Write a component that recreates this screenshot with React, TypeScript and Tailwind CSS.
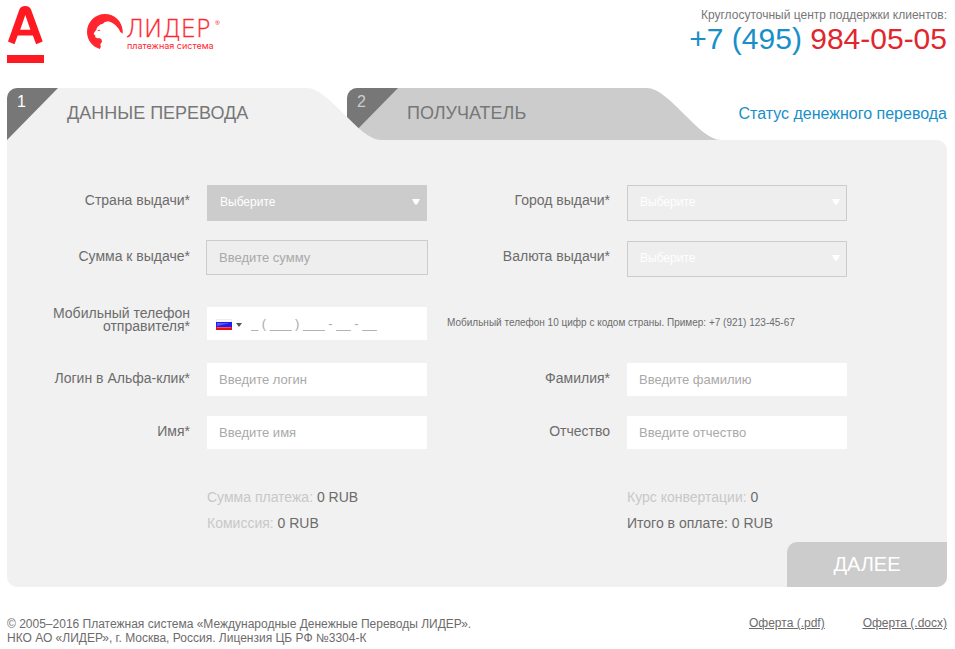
import { useId, type ReactNode } from 'react';

function AlfaLogo() {
  return (
    <svg width="37" height="58" viewBox="0 0 37 58" fill="#ff1921" role="img" aria-label="Альфа-Банк">
      <path
        fillRule="evenodd"
        d="M12.400 3.600C13.400 1.200 15 0 18.200 0s4.800 1.200 5.800 3.600L35.700 35.600l-6.600 2.600-3.200-8.600H10.700l-3.200 8.600-6.500-2.600ZM18.300 9 13.200 23.800h10.200Z"
      />
      <rect y="49" width="37" height="8" />
    </svg>
  );
}

function LeaderLogo() {
  return (
    <svg width="136" height="40" viewBox="0 0 136 40" fill="#ff2630" role="img" aria-label="ЛИДЕР платежная система">
      <path d="M12.800 36C5 33.500 0 26.800 0 19 0 9 8 1 18 1c9.500 0 16.800 7 17.700 16.500l-.1 3.300-2.200-1.700-1.600-3.200-3.400-3.900-3.300-2.300-3.600-1.400-3.700.6-1.900 1.900-2.600.6-1.700 1.500-1.600 1.700-.6 2.200-2.200 2.600-.5 1.900 1.500.9.1 2 2 1.100 2.600-.1 1.700 1.400.4 2.200-1.700 2.500.5 2.400Z" />
      <path d="m10 17.300 2.400-.6 1.200.5-1.600.8Z" />
      <text x="39" y="24" fontSize="24" stroke="#ff2630" strokeWidth="0.3" fontFamily="'DejaVu Sans Light', 'DejaVu Sans', sans-serif" fontWeight="200">ЛИДЕР</text>
      <text x="128" y="12" fontSize="6" fontFamily="'Open Sans', sans-serif">®</text>
      <text x="40" y="36" fontSize="9" fontFamily="Inter, sans-serif" fontWeight="400">платежная система</text>
    </svg>
  );
}

type TabProps = { step: number; title: string; active?: boolean };

function Tab({ step, title, active = false }: TabProps) {
  const clip = useId();
  return (
    <li className={active ? 'relative z-10 h-[52px] w-[376px]' : 'relative -ml-9 h-[52px] w-[376px]'}>
      <svg className="absolute inset-0" width="376" height="52" viewBox="0 0 376 52" aria-hidden="true">
        <clipPath id={clip}>
          <path d="M0 52V10A10 10 0 0 1 10 0H300C322 0 352 52 374 52Z" />
        </clipPath>
        <g clipPath={`url(#${clip})`}>
          <rect width="376" height="52" fill={active ? '#f1f1f1' : '#cccccc'} />
          <path d="M0 0H51L0 52Z" fill="#777777" />
        </g>
      </svg>
      <button
        type="button"
        aria-current={active ? 'step' : undefined}
        className="relative flex h-full w-full items-start pl-[10px] text-left"
      >
        <span className={active ? 'w-[50px] pt-1 text-base leading-5 text-white' : 'w-[50px] pt-1 text-base leading-5 text-[#cccccc]'}>
          {step}
        </span>
        <span className="pt-[15px] text-lg leading-5 text-[#777777]">{title}</span>
      </button>
    </li>
  );
}

function Field({ id, label, children }: { id: string; label: ReactNode; children: ReactNode }) {
  return (
    <div className="flex w-[420px] items-start gap-[17px]">
      <label htmlFor={id} className="flex min-h-[31px] w-[183px] items-center justify-end text-right text-sm leading-[13px]">
        {label}
      </label>
      {children}
    </div>
  );
}

function SelectField({ id, label, disabled = false }: { id: string; label: string; disabled?: boolean }) {
  return (
    <Field id={id} label={label}>
      <div className="relative">
        <select
          id={id}
          disabled={disabled}
          className="block h-9 w-[220px] appearance-none rounded-none border border-[#cccccc] bg-[#cccccc] px-3 pb-[2px] text-xs text-white opacity-100 disabled:bg-[#eeeeee]"
        >
          <option>Выберите</option>
        </select>
        <svg className="pointer-events-none absolute top-[14px] right-[7px]" width="8" height="6" viewBox="0 0 8 6" fill="#ffffff" aria-hidden="true">
          <path d="M0 0H8L5 5.500H3Z" />
        </svg>
      </div>
    </Field>
  );
}

function InputField({ id, label, placeholder, disabled = false }: { id: string; label: string; placeholder: string; disabled?: boolean }) {
  return (
    <Field id={id} label={label}>
      <input
        id={id}
        type="text"
        disabled={disabled}
        placeholder={placeholder}
        className="block h-[33px] w-[220px] bg-white px-3 text-[13px] placeholder:text-[#a9a9a9] disabled:bg-[#eeeeee] disabled:outline disabled:outline-[#cccccc]"
      />
    </Field>
  );
}

function Flag() {
  return (
    <svg width="16" height="11" viewBox="0 0 16 11" aria-hidden="true">
      <rect width="16" height="11" fill="#e8eef2" />
      <rect x="1" y="1" width="14" height="2" fill="#f8f8f8" />
      <rect y="3" width="16" height="5" fill="#1d1df0" />
      <path d="M1 4H14L1 7Z" fill="#5a5aff" />
      <rect y="8" width="16" height="3" fill="#f00c0c" />
      <rect x="1" y="8" width="14" height="1" fill="#ff5050" />
    </svg>
  );
}

export default function App() {
  return (
    <div className="pr-2 pl-[7px] font-['Liberation_Sans',Arial,sans-serif] text-[#6c6c6c]">
      <header className="flex h-[88px] items-start justify-between pt-[6px]">
        <div className="flex items-start gap-[43px]">
          <AlfaLogo />
          <div className="pt-[7px]">
            <LeaderLogo />
          </div>
        </div>
        <div className="pt-[2px] text-right">
          <p className="text-xs leading-[14px] text-[#777777]">Круглосуточный центр поддержки клиентов:</p>
          <p className="text-[30px] leading-[34px] text-[#188fc7]">
            +7 (495) <span className="text-[#e1262d]">984-05-05</span>
          </p>
        </div>
      </header>

      <nav className="flex items-center justify-between">
        <ol className="flex">
          <Tab step={1} title="ДАННЫЕ ПЕРЕВОДА" active />
          <Tab step={2} title="ПОЛУЧАТЕЛЬ" />
        </ol>
        <a href="#status" className="text-base text-[#188fc7]">
          Статус денежного перевода
        </a>
      </nav>

      <form className="overflow-hidden rounded-[10px] rounded-tl-none bg-[#f1f1f1] pt-[45px]" onSubmit={(e) => e.preventDefault()}>
        <div className="flex">
          <SelectField id="country" label="Страна выдачи*" />
          <SelectField id="city" label="Город выдачи*" disabled />
        </div>
        <div className="mt-5 flex">
          <InputField id="amount" label="Сумма к выдаче*" placeholder="Введите сумму" disabled />
          <SelectField id="currency" label="Валюта выдачи*" disabled />
        </div>
        <div className="mt-[30px] flex">
          <Field
            id="phone"
            label={
              <span className="pb-[6px]">
                Мобильный телефон
                <br />
                отправителя*
              </span>
            }
          >
            <div className="flex h-[33px] w-[220px] bg-white">
              <button type="button" aria-label="Россия" className="flex items-center gap-1 pt-[2px] pr-[9px] pl-[9px]">
                <Flag />
                <svg width="6" height="4" viewBox="0 0 6 4" fill="#555555" aria-hidden="true">
                  <path d="M0 0H6L3 4Z" />
                </svg>
              </button>
              <input
                id="phone"
                type="tel"
                placeholder="_ ( ___ ) ___ - __ - __"
                className="min-w-0 flex-1 text-[13px] placeholder:text-[#a9a9a9]"
              />
            </div>
          </Field>
          <p className="pl-5 text-[10px] leading-[31px]">Мобильный телефон 10 цифр с кодом страны. Пример: +7 (921) 123-45-67</p>
        </div>
        <div className="mt-[23px] flex">
          <InputField id="login" label="Логин в Альфа-клик*" placeholder="Введите логин" />
          <InputField id="surname" label="Фамилия*" placeholder="Введите фамилию" />
        </div>
        <div className="mt-5 flex">
          <InputField id="name" label="Имя*" placeholder="Введите имя" />
          <InputField id="patronymic" label="Отчество" placeholder="Введите отчество" />
        </div>

        <div className="mt-[35px] flex pl-[200px] text-sm leading-[26px]">
          <div className="w-[420px]">
            <p>
              <span className="text-[#c8c8c8]">Сумма платежа:</span> 0 RUB
            </p>
            <p>
              <span className="text-[#c8c8c8]">Комиссия:</span> 0 RUB
            </p>
          </div>
          <div>
            <p>
              <span className="text-[#c8c8c8]">Курс конвертации:</span> 0
            </p>
            <p>Итого в оплате: 0 RUB</p>
          </div>
        </div>
        <div className="mt-[6px] flex justify-end">
          <button type="submit" className="h-[45px] w-40 rounded-tl-[10px] bg-[#cccccc] pb-[2px] text-xl text-white">
            ДАЛЕЕ
          </button>
        </div>
      </form>

      <footer className="flex items-start justify-between pt-[30px] text-xs leading-[14px]">
        <p>
          © 2005–2016 Платежная система «Международные Денежные Переводы ЛИДЕР».
          <br />
          НКО АО «ЛИДЕР», г. Москва, Россия. Лицензия ЦБ РФ №3304-К
        </p>
        <div className="flex gap-[38px] leading-3 underline">
          <a href="#offer-pdf">Оферта (.pdf)</a>
          <a href="#offer-docx">Оферта (.docx)</a>
        </div>
      </footer>
    </div>
  );
}
